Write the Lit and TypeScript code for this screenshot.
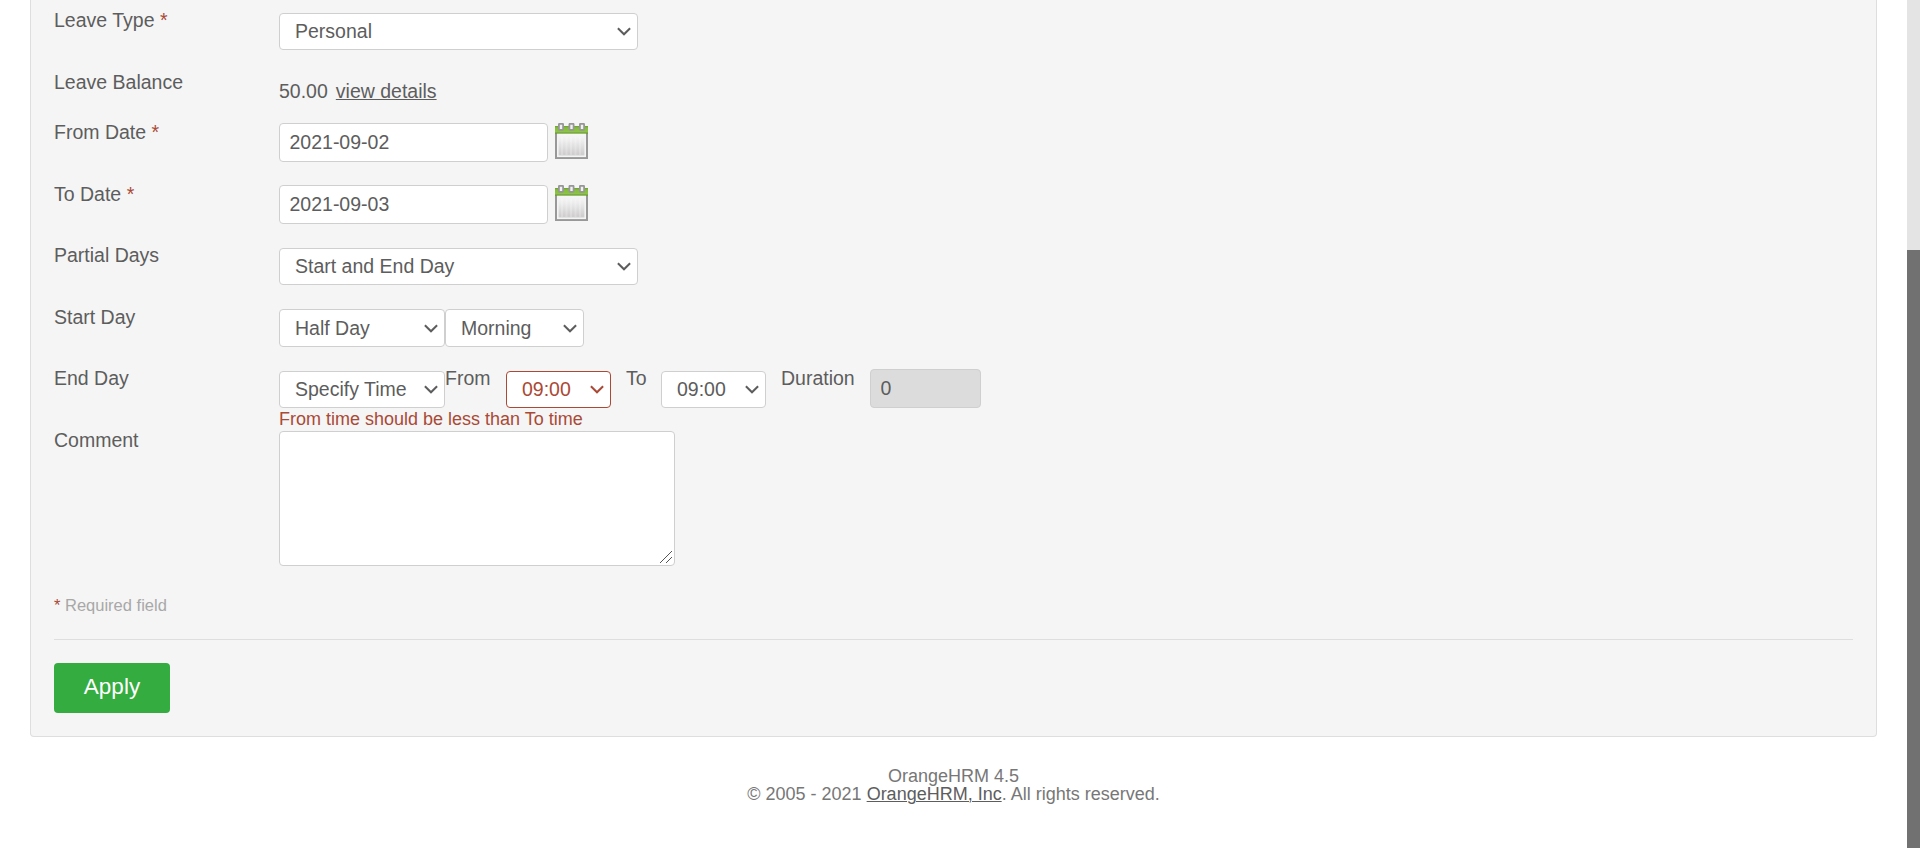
import { LitElement, html, svg, css, nothing } from "lit";
import { customElement, property } from "lit/decorators.js";

const stripes = [7, 11.5, 16, 20.5, 25];

@customElement("calendar-icon")
class CalendarIcon extends LitElement {
  static styles = css`
    :host { display: block; width: 33px; height: 36px; }
    svg { display: block; }
  `;
  render() {
    return html`<svg width="33" height="36" viewBox="0 0 33 36">
      <defs>
        <linearGradient id="page" x1="0" y1="0" x2="0" y2="1">
          <stop offset="0" stop-color="#fbfbfb" /><stop offset="0.35" stop-color="#ececec" />
          <stop offset="0.85" stop-color="#cfcdce" /><stop offset="1" stop-color="#d6d6d6" />
        </linearGradient>
        <linearGradient id="band" x1="0" y1="0" x2="0" y2="1">
          <stop offset="0" stop-color="#6f9a3c" /><stop offset="0.25" stop-color="#83bd3b" />
          <stop offset="0.75" stop-color="#8cc446" /><stop offset="1" stop-color="#5e9423" />
        </linearGradient>
      </defs>
      <rect x="1" y="9" width="31" height="26" fill="url(#page)" stroke="#989898" stroke-width="2" />
      <rect x="2.8" y="10.5" width="27.4" height="22.8" fill="none" stroke="#f4f4f4" stroke-width="1.6" />
      ${stripes.map((x) => svg`<rect x=${x - 1} y="14" width="2" height="18" fill="#fff" opacity="0.22" />`)}
      <rect x="0" y="3" width="33" height="7.6" fill="url(#band)" />
      ${[3.9, 14.4, 24.9].map((x) => svg`<rect x=${x} y="0.8" width="4.2" height="6" rx="0.6" fill="#f1f1f1" stroke="#979797" stroke-width="1.8" />`)}
    </svg>`;
  }
}

@customElement("drop-down")
class DropDown extends LitElement {
  @property() value = "";
  @property({ type: Boolean, reflect: true }) invalid = false;
  static styles = css`
    :host {
      display: flex; align-items: center; justify-content: space-between;
      box-sizing: border-box; flex: none; height: 37px; padding: 0 6px 1px 15px;
      border: 1px solid #cfcfcf; border-radius: 4px;
      background: #fff; color: #5d5d5d; white-space: nowrap; line-height: 22px;
    }
    :host([invalid]) { color: #aa4935; border-color: #aa4935; }
    svg { display: block; flex: none; padding-top: 1px; }
  `;
  render() {
    return html`<span>${this.value}</span>
      <svg width="14" height="9" viewBox="0 0 14 9" fill="none" stroke="currentColor" stroke-width="2"><path d="M0.9 1.2 7 7.3 13.1 1.2" /></svg>`;
  }
}

@customElement("app-root")
class AppRoot extends LitElement {
  static styles = css`
    :host {
      display: flex; width: 100%; height: 848px; overflow: hidden; background: #fff;
      font: 19.5px/22px "Liberation Sans", Arial, sans-serif; color: #5d5d5d;
    }
    .page { flex: 1; display: flex; flex-direction: column; padding: 0 30px; }
    .panel {
      box-sizing: border-box; height: 737px; padding: 9px 23px 0;
      display: flex; flex-direction: column; background: #f5f5f5;
      border: 1px solid #dedede; border-top: 0; border-radius: 0 0 4px 4px;
    }
    .row { display: grid; grid-template-columns: 225px 1fr; flex: none; }
    .h50 { height: 50px; } .h61 { height: 61px; } .h62 { height: 62px; } .comment { height: 164px; }
    .req { color: #aa4935; }
    .field { display: flex; align-items: flex-start; }
    .wide { width: 359px; margin-top: 4px; }
    .balance { padding-top: 9px; gap: 8px; }
    .link { color: #5d5d5d; text-decoration: underline; text-decoration-thickness: 1px; text-underline-offset: 1px; }
    input, textarea {
      box-sizing: border-box; margin: 2px 0 0; font: inherit; color: inherit; outline: 0;
      border: 1px solid #cfcfcf; border-radius: 4px; background: #fff;
    }
    input { height: 39px; padding: 0 9px 1px 9.5px; }
    .date { width: 269px; }
    .cal { margin: 2px 0 0 7px; }
    .day { width: 166px; margin-top: 4px; }
    .part { width: 139px; margin-top: 4px; }
    .tall { height: 38px; margin-top: 3px; }
    .time { width: 105px; margin-top: 4px; }
    .from { width: 61px; }
    .to { width: 35px; padding-left: 15px; }
    .duration { width: 89px; padding-left: 15px; }
    .total { width: 111px; background: #dcdcdc; }
    .stack { display: flex; flex-direction: column; }
    .error { color: #aa4935; font-size: 18px; line-height: 20px; padding-top: 1px; height: 19px; white-space: nowrap; }
    .area { position: relative; width: 396px; height: 137px; }
    textarea { display: block; width: 396px; height: 135px; resize: none; }
    .grip { position: absolute; right: 2px; bottom: 2px; }
    .note { height: 44px; color: #a8a8a8; font-size: 16.5px; line-height: 20px; padding-top: 2px; flex: none; }
    .actions { border-top: 1px solid #dedede; padding-top: 23px; }
    .apply {
      display: block; width: 116px; height: 50px; padding: 0 0 2px; border: 0; border-radius: 4px;
      background: #34ac40; color: #fff; font: 22.5px "Liberation Sans", Arial, sans-serif;
    }
    .footer { padding-top: 30px; text-align: center; font-size: 18px; line-height: 18px; color: #777; }
    .track { width: 13px; background: #e4e4e4; padding-top: 250px; box-sizing: border-box; display: flex; }
    .thumb { flex: 1; background: #717171; }
  `;

  label(text: string, required = false) {
    return html`<label>${text}${required ? html` <span class="req">*</span>` : nothing}</label>`;
  }

  dateField(value: string) {
    return html`<div class="field"><input class="date" .value=${value} /><calendar-icon class="cal"></calendar-icon></div>`;
  }

  render() {
    return html`
      <div class="page">
        <div class="panel">
          <div class="row h62">${this.label("Leave Type", true)}
            <div class="field"><drop-down class="wide" value="Personal"></drop-down></div></div>
          <div class="row h50">${this.label("Leave Balance")}
            <div class="field balance"><span>50.00</span><a class="link">view details</a></div></div>
          <div class="row h62">${this.label("From Date", true)}${this.dateField("2021-09-02")}</div>
          <div class="row h61">${this.label("To Date", true)}${this.dateField("2021-09-03")}</div>
          <div class="row h62">${this.label("Partial Days")}
            <div class="field"><drop-down class="wide" value="Start and End Day"></drop-down></div></div>
          <div class="row h61">${this.label("Start Day")}
            <div class="field">
              <drop-down class="day tall" value="Half Day"></drop-down><drop-down class="part tall" value="Morning"></drop-down>
            </div></div>
          <div class="row h62">${this.label("End Day")}
            <div class="stack">
              <div class="field">
                <drop-down class="day" value="Specify Time"></drop-down>
                <span class="from">From</span><drop-down class="time" invalid value="09:00"></drop-down>
                <span class="to">To</span><drop-down class="time" value="09:00"></drop-down>
                <span class="duration">Duration</span><input class="total" readonly .value=${"0"} />
              </div>
              <div class="error">From time should be less than To time</div>
            </div></div>
          <div class="row comment">${this.label("Comment")}
            <div class="area"><textarea></textarea>
              <svg class="grip" width="14" height="14" viewBox="0 0 14 14" stroke="#555" stroke-width="1"><path d="M1 13 13 1M7 13 13 7" /></svg>
            </div></div>
          <div class="note"><span class="req">*</span> Required field</div>
          <div class="actions"><button class="apply">Apply</button></div>
        </div>
        <div class="footer">OrangeHRM 4.5<br />© 2005 - 2021 <a class="link">OrangeHRM, Inc</a>. All rights reserved.</div>
      </div>
      <div class="track"><div class="thumb"></div></div>
    `;
  }
}
